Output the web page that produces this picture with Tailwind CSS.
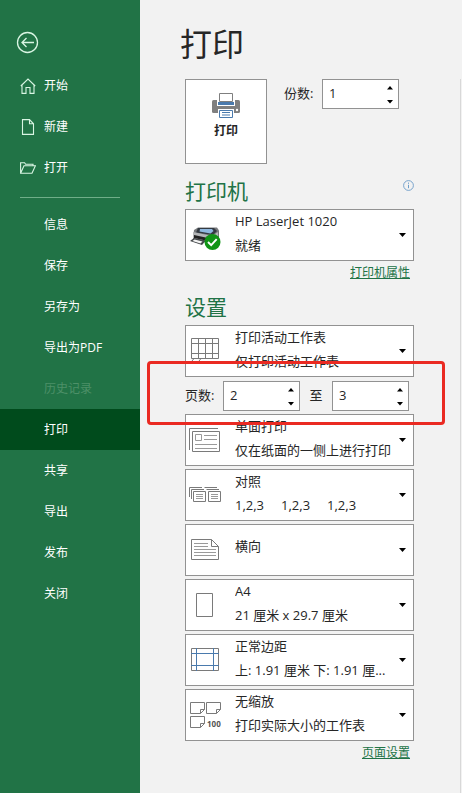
<!DOCTYPE html>
<html lang="zh-CN">
<head>
  <meta charset="UTF-8">
  <meta name="viewport" content="width=device-width, initial-scale=1">
  <title>打印</title>
  <script src="https://cdn.jsdelivr.net/npm/@tailwindcss/browser@4"></script>
</head>
<body class="flex min-h-screen bg-[#f2f2f2] font-['Open_Sans','Noto_Sans_CJK_SC',sans-serif] text-[13px] text-[#262626]">
  <!-- Sidebar -->
  <nav class="w-35 shrink-0 bg-[#217346] pt-[31px] text-xs text-white">
    <button class="ml-4 block" aria-label="返回">
      <svg class="size-[23px]" viewBox="0 0 23 23" fill="none" stroke="#d9f5e3" stroke-width="1.3">
        <circle cx="11.5" cy="11.5" r="10"/>
        <path d="M18 11.5H6M10.5 7L6 11.5l4.5 4.5"/>
      </svg>
    </button>
    <div class="mt-[11px]">
      <a href="#" class="flex h-[41px] items-center gap-2 pl-5">
        <svg class="size-4" viewBox="0 0 16 16" fill="none" stroke="#d9f5e3" stroke-width="1.1"><path d="M.8 8L8 1l7.200 7M2 7v8.400h4V9.500h4v5.900h4V7"/></svg>
        开始
      </a>
      <a href="#" class="flex h-[41px] items-center gap-2 pl-5">
        <svg class="size-4" viewBox="0 0 16 16" fill="none" stroke="#d9f5e3" stroke-width="1.1"><path d="M2.500.6h7l4 4.200v10.600h-11zM9.500.6v4.200h4"/></svg>
        新建
      </a>
      <a href="#" class="flex h-[41px] items-center gap-2 pl-5">
        <svg class="size-4" viewBox="0 0 16 16" fill="none" stroke="#d9f5e3" stroke-width="1.1"><path d="M.6 13V2.700h4l1 1.600h7.400v1.400M.6 13.200L4 5.700h11.400L12 13.200z"/></svg>
        打开
      </a>
    </div>
    <hr class="mx-5 mt-[9px] mb-1.5 border-[#6fae88]">
    <div>
      <a href="#" class="flex h-[41px] items-center pl-11">信息</a>
      <a href="#" class="flex h-[41px] items-center pl-11">保存</a>
      <a href="#" class="flex h-[41px] items-center pl-11">另存为</a>
      <a href="#" class="flex h-[41px] items-center pl-11">导出为PDF</a>
      <a href="#" class="flex h-[41px] items-center pl-11 text-[#4d9068]" aria-disabled="true">历史记录</a>
      <a href="#" class="flex h-[41px] items-center bg-[#004b1c] pl-11" aria-current="page">打印</a>
      <a href="#" class="flex h-[41px] items-center pl-11">共享</a>
      <a href="#" class="flex h-[41px] items-center pl-11">导出</a>
      <a href="#" class="flex h-[41px] items-center pl-11">发布</a>
      <a href="#" class="flex h-[41px] items-center pl-11">关闭</a>
    </div>
  </nav>

  <main class="flex min-w-0 flex-1 flex-col pt-2 pr-px">
    <h1 class="pl-10 text-[32px] leading-[71px]">打印</h1>

    <div class="flex-1 border-r border-[#d8d8d8] pr-[46px] pl-[45px]">
      <!-- Print button and copies -->
      <div class="flex items-start">
        <button class="flex h-[85px] w-[82px] flex-col items-center border border-[#929292] bg-white pt-[13px] text-xs font-bold">
          <svg class="h-[26px] w-7" viewBox="0 0 28 26">
            <rect y="7" width="28" height="13" rx="1.500" fill="#7f7f7f"/>
            <path d="M5 7h18v6H5z" fill="#fff"/>
            <path d="M6 9h16v3H6z" fill="#4a7aad"/>
            <path d="M7.500.5h13v8h-13z" fill="#fff" stroke="#7f7f7f"/>
            <path d="M6 16h16v9H6z" fill="#fff"/>
            <path d="M7.500 17.500h13v7h-13z" fill="#fff" stroke="#4a7aad"/>
            <path d="M10 19.500h8M10 22h8" stroke="#4a7aad"/>
            <circle cx="25" cy="17" r="1.200" fill="#fff"/>
          </svg>
          <span class="mt-1 leading-4">打印</span>
        </button>
        <div class="ml-[17px] flex items-center">
          <label for="copies" class="w-[38px]">份数:</label>
          <div class="flex h-[30px] w-[77px] border border-[#929292] bg-white">
            <input id="copies" type="number" value="1" class="min-w-0 flex-1 [appearance:textfield] pl-1.5 outline-none [&::-webkit-inner-spin-button]:appearance-none">
            <div class="flex w-4 flex-col items-center justify-center gap-[3px]">
              <button data-step="1" aria-label="增加份数"><svg class="h-2.5 w-1.5" viewBox="0 0 6 10"><path d="M0 6.500h6L3 3z"/></svg></button>
              <button data-step="-1" aria-label="减少份数"><svg class="h-2.5 w-1.5" viewBox="0 0 6 10"><path d="M0 4h6L3 7.500z"/></svg></button>
            </div>
          </div>
        </div>
      </div>

      <!-- Printer -->
      <div class="mt-[13px] mb-1 flex justify-between">
        <h2 class="text-[21px] leading-7 text-[#217346]">打印机</h2>
        <button class="mt-[3px] self-start" aria-label="打印机信息">
          <svg class="size-[11px]" viewBox="0 0 11 11" fill="none" stroke="#6c9cc8"><circle cx="5.500" cy="5.500" r="4.900" stroke-width=".9"/><path d="M5.500 4.800v3.400M5.500 2.600v1.200"/></svg>
        </button>
      </div>
      <div class="flex h-[52px] items-center border border-[#929292] bg-white pl-[3px]">
        <svg class="size-8 shrink-0" viewBox="0 0 32 32">
          <path d="M5 11l4-2.500h19l2 3v8l-6 5-20-4z" fill="#77797c"/>
          <path d="M9 9h16l3 3-4 4-17-2.500z" fill="#343a42"/>
          <path d="M11 10h12l1.500 2-3 2.500-11-2z" fill="#8fb8df"/>
          <path d="M4 13l19 4 6-4v7l-6 4-19-5z" fill="#b4b6b8"/>
          <path d="M5 16l14 3v3L5 19z" fill="#222"/>
          <path d="M1 22l4-3 12 2.500-4 4.500z" fill="#45484b"/>
          <path d="M3.500 22l2-1.500 8 2-2 2z" fill="#f4f4f4"/>
          <circle cx="23.500" cy="23" r="8" fill="#119416"/>
          <path d="M19 23l3.200 3.200 5.500-6" fill="none" stroke="#fff" stroke-width="1.900"/>
        </svg>
        <div class="ml-3.5 min-w-0 flex-1 pb-1 leading-6">
          <select aria-label="打印机" class="block h-6 w-full appearance-none outline-none"><option>HP LaserJet 1020</option></select>
          <p>就绪</p>
        </div>
        <svg class="mx-[7px] h-1 w-[7px] shrink-0" viewBox="0 0 7 4"><path d="M0 0h7L3.500 4z"/></svg>
      </div>
      <p class="mt-1 pr-1 text-right text-xs leading-4"><a href="#" class="text-[#217346] underline">打印机属性</a></p>

      <!-- Settings -->
      <h2 class="mt-3 mb-1 text-[21px] leading-7 text-[#217346]">设置</h2>
      <div class="flex flex-col gap-[3px]">
        <div class="flex h-[52px] items-center border border-[#929292] bg-white pl-[3px]">
          <svg class="size-8 shrink-0" viewBox="0 0 32 32" fill="none" stroke="#7a7a7a">
            <path d="M2.500 3.500h27v20h-27zM2.500 8.500h27M2.500 18.500h27M9.500 3.500v20M16.500 3.500v20M23.500 3.500v20M3 26l2-2.500M10 26l2-2.500"/>
          </svg>
          <div class="ml-3.5 min-w-0 flex-1 pb-1 leading-6">
            <select aria-label="打印范围" class="block h-6 w-full appearance-none outline-none"><option>打印活动工作表</option></select>
            <p>仅打印活动工作表</p>
          </div>
          <svg class="mx-[7px] h-1 w-[7px] shrink-0" viewBox="0 0 7 4"><path d="M0 0h7L3.500 4z"/></svg>
        </div>

        <!-- Page range, marked with a red frame -->
        <div class="relative flex items-center pt-px">
          <label for="from" class="w-[38px]">页数:</label>
          <div class="flex h-[30px] w-[77px] border border-[#929292] bg-white">
            <input id="from" type="number" value="2" class="min-w-0 flex-1 [appearance:textfield] pl-1.5 outline-none [&::-webkit-inner-spin-button]:appearance-none">
            <div class="flex w-4 flex-col items-center justify-center gap-[3px]">
              <button data-step="1" aria-label="增加起始页"><svg class="h-2.5 w-1.5" viewBox="0 0 6 10"><path d="M0 6.500h6L3 3z"/></svg></button>
              <button data-step="-1" aria-label="减少起始页"><svg class="h-2.5 w-1.5" viewBox="0 0 6 10"><path d="M0 4h6L3 7.500z"/></svg></button>
            </div>
          </div>
          <label for="to" class="w-8 text-center">至</label>
          <div class="flex h-[30px] w-[77px] border border-[#929292] bg-white">
            <input id="to" type="number" value="3" class="min-w-0 flex-1 [appearance:textfield] pl-1.5 outline-none [&::-webkit-inner-spin-button]:appearance-none">
            <div class="flex w-4 flex-col items-center justify-center gap-[3px]">
              <button data-step="1" aria-label="增加结束页"><svg class="h-2.5 w-1.5" viewBox="0 0 6 10"><path d="M0 6.500h6L3 3z"/></svg></button>
              <button data-step="-1" aria-label="减少结束页"><svg class="h-2.5 w-1.5" viewBox="0 0 6 10"><path d="M0 4h6L3 7.500z"/></svg></button>
            </div>
          </div>
          <div class="pointer-events-none absolute -top-[19px] -right-[31px] -bottom-3.5 -left-[38px] z-10 rounded border-3 border-[#ea2a22]"></div>
        </div>

        <div class="flex h-[52px] items-center border border-[#929292] bg-white pl-[3px]">
          <svg class="size-8 shrink-0" viewBox="0 0 32 32" fill="none" stroke="#7a7a7a">
            <path d="M.5 26V4.500H29M3.500 7.500h27v20h-27z"/>
            <path d="M6.500 10.500h6v6h-6zM15 11.500h13M15 15.500h13M6 20.500h22M6 24.500h22" stroke="#9a9a9a"/>
          </svg>
          <div class="ml-3.5 min-w-0 flex-1 pb-1 leading-6">
            <select aria-label="单双面" class="block h-6 w-full appearance-none outline-none"><option>单面打印</option></select>
            <p class="whitespace-nowrap">仅在纸面的一侧上进行打印</p>
          </div>
          <svg class="mx-[7px] h-1 w-[7px] shrink-0" viewBox="0 0 7 4"><path d="M0 0h7L3.500 4z"/></svg>
        </div>

        <div class="flex h-[52px] items-center border border-[#929292] bg-white pl-[3px]">
          <svg class="size-8 shrink-0" viewBox="0 0 32 32" fill="none" stroke="#7a7a7a">
            <path d="M.5 18V8.500H13M2.500 20v-9.500H15M4.500 12.500h12v10h-12zM15.500 8.500H28M17.500 10.500H30M19.500 12.500h12v10h-12z"/>
            <path d="M7 15.500h7M7 17.500h7M7 19.500h7M22 15.500h7M22 17.500h7M22 19.500h7" stroke="#9a9a9a"/>
          </svg>
          <div class="ml-3.5 min-w-0 flex-1 pb-1 leading-6">
            <select aria-label="对照" class="block h-6 w-full appearance-none outline-none"><option>对照</option></select>
            <p class="flex gap-[17px]"><span>1,2,3</span><span>1,2,3</span><span>1,2,3</span></p>
          </div>
          <svg class="mx-[7px] h-1 w-[7px] shrink-0" viewBox="0 0 7 4"><path d="M0 0h7L3.500 4z"/></svg>
        </div>

        <div class="flex h-[52px] items-center border border-[#929292] bg-white pl-[3px]">
          <svg class="size-8 shrink-0" viewBox="0 0 32 32" fill="none" stroke="#7a7a7a">
            <path d="M2.500 5.500h20l7 7v13h-27zM22.500 5.500v7h7"/>
            <path d="M5 9.500h14M5 12.500h14M5 15.500h22M5 18.500h22M5 21.500h22" stroke="#9a9a9a"/>
          </svg>
          <div class="ml-3.5 min-w-0 flex-1 pb-2 leading-6">
            <select aria-label="方向" class="block h-6 w-full appearance-none outline-none"><option>横向</option></select>
          </div>
          <svg class="mx-[7px] h-1 w-[7px] shrink-0" viewBox="0 0 7 4"><path d="M0 0h7L3.500 4z"/></svg>
        </div>

        <div class="flex h-[52px] items-center border border-[#929292] bg-white pl-[3px]">
          <svg class="size-8 shrink-0" viewBox="0 0 32 32" fill="none" stroke="#7a7a7a"><path d="M7.500 4.500h16v23h-16z"/></svg>
          <div class="ml-3.5 min-w-0 flex-1 pb-1 leading-6">
            <select aria-label="纸张大小" class="block h-6 w-full appearance-none outline-none"><option>A4</option></select>
            <p>21 厘米 x 29.7 厘米</p>
          </div>
          <svg class="mx-[7px] h-1 w-[7px] shrink-0" viewBox="0 0 7 4"><path d="M0 0h7L3.500 4z"/></svg>
        </div>

        <div class="flex h-[52px] items-center border border-[#929292] bg-white pl-[3px]">
          <svg class="size-8 shrink-0" viewBox="0 0 32 32" fill="none">
            <path d="M2.500 4.500h27v22h-27z" stroke="#7a7a7a"/>
            <path d="M7.500 4v23M24.500 4v23M2 9.500h28M2 21.500h28" stroke="#4a7aad"/>
          </svg>
          <div class="ml-3.5 min-w-0 flex-1 pb-1 leading-6">
            <select aria-label="页边距" class="block h-6 w-full appearance-none outline-none"><option>正常边距</option></select>
            <p class="whitespace-nowrap">上: 1.91 厘米 下: 1.91 厘...</p>
          </div>
          <svg class="mx-[7px] h-1 w-[7px] shrink-0" viewBox="0 0 7 4"><path d="M0 0h7L3.500 4z"/></svg>
        </div>

        <div class="flex h-[52px] items-center border border-[#929292] bg-white pl-[3px]">
          <svg class="size-8 shrink-0" viewBox="0 0 32 32" fill="none" stroke="#7a7a7a">
            <path d="M1.500 3.500h14v7l-4 4h-10zM15.500 10.500h-4v4M17.500 3.500h14v7l-4 4h-10zM31.500 10.500h-4v4M1.500 17.500h14v7l-4 4h-10zM15.500 24.500h-4v4"/>
            <text x="18" y="28" class="text-[8px] font-bold" fill="#555" stroke="none">100</text>
          </svg>
          <div class="ml-3.5 min-w-0 flex-1 pb-1 leading-6">
            <select aria-label="缩放" class="block h-6 w-full appearance-none outline-none"><option>无缩放</option></select>
            <p>打印实际大小的工作表</p>
          </div>
          <svg class="mx-[7px] h-1 w-[7px] shrink-0" viewBox="0 0 7 4"><path d="M0 0h7L3.500 4z"/></svg>
        </div>
      </div>
      <p class="mt-1 pr-1 text-right text-xs leading-4"><a href="#" class="text-[#217346] underline">页面设置</a></p>
    </div>
  </main>

  <script>
    // Spinner arrows
    document.querySelectorAll('[data-step]').forEach(btn => {
      btn.addEventListener('click', () => {
        const input = btn.parentNode.parentNode.querySelector('input');
        input.value = Math.max(1, Number(input.value) + Number(btn.dataset.step));
      });
    });
  </script>
</body>
</html>
